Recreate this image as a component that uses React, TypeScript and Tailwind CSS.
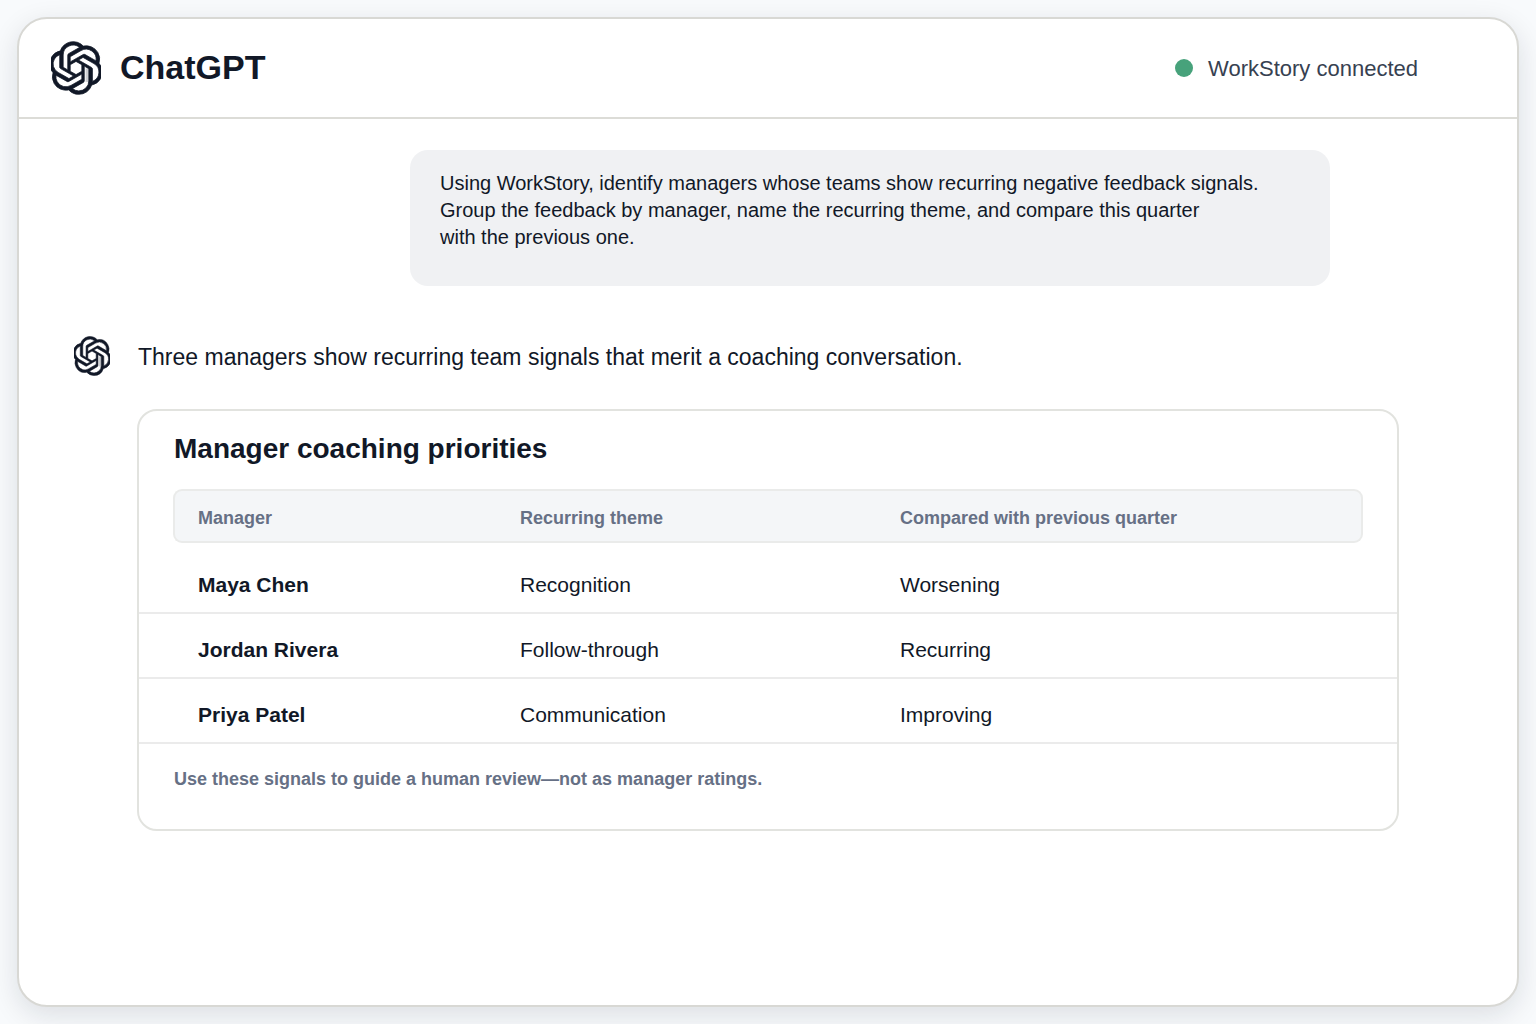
import { SiOpenai } from 'react-icons/si';

interface Priority {
  manager: string;
  theme: string;
  trend: string;
}

const priorities: Priority[] = [
  { manager: 'Maya Chen', theme: 'Recognition', trend: 'Worsening' },
  { manager: 'Jordan Rivera', theme: 'Follow-through', trend: 'Recurring' },
  { manager: 'Priya Patel', theme: 'Communication', trend: 'Improving' },
];

function Logo({ className }: { className: string }) {
  return (
    <svg viewBox="0.8 -0.3 22.4 24.6" preserveAspectRatio="none" className={className} aria-hidden="true">
      <path d="M17 12.2V18.4" stroke="#cfd1d5" strokeWidth="1.4" />
      <SiOpenai size={24} stroke="currentColor" strokeWidth="0.35" overflow="visible" />
    </svg>
  );
}

function Header() {
  return (
    <header className="flex h-[100px] items-center justify-between border-b-2 border-[#dcdcd7] pl-8 pr-[99px]">
      <div className="flex items-center gap-[19px]">
        <Logo className="h-[54px] w-[50px] shrink-0" />
        <h1 className="pb-0.5 text-[34px] font-bold leading-10">ChatGPT</h1>
      </div>
      <div className="flex items-center gap-[15px] text-[22px] leading-7 text-[#374151]">
        <span className="size-[18px] rounded-full bg-[#47a27b]" />
        <span className="pt-0.5">WorkStory connected</span>
      </div>
    </header>
  );
}

function PriorityTable() {
  return (
    <table className="w-full table-fixed border-separate border-spacing-0 text-left">
      <colgroup>
        <col className="w-[381px]" />
        <col className="w-[380px]" />
        <col />
      </colgroup>
      <thead className="text-lg leading-6 text-[#667085]">
        <tr>
          <th scope="col" className="pl-[34px]">
            <div className="flex h-[54px] items-center rounded-l-[9px] border-y-2 border-l-2 border-[#eaebea] bg-[#f4f6f8] pl-[23px] pt-1">
              Manager
            </div>
          </th>
          <th scope="col">
            <div className="flex h-[54px] items-center border-y-2 border-[#eaebea] bg-[#f4f6f8] pt-1">
              Recurring theme
            </div>
          </th>
          <th scope="col" className="pr-[34px]">
            <div className="flex h-[54px] items-center rounded-r-[9px] border-y-2 border-r-2 border-[#eaebea] bg-[#f4f6f8] pt-1">
              Compared with previous quarter
            </div>
          </th>
        </tr>
      </thead>
      <tbody className="text-[21px] leading-7">
        {priorities.map((row, index) => (
          <tr key={row.manager} className={index === 0 ? 'h-[71px]' : 'h-[65px]'}>
            <th scope="row" className="border-b-2 border-[#ebebeb] pb-[13px] pl-[59px] align-bottom">
              {row.manager}
            </th>
            <td className="border-b-2 border-[#ebebeb] pb-[13px] align-bottom">{row.theme}</td>
            <td className="border-b-2 border-[#ebebeb] pb-[13px] align-bottom">{row.trend}</td>
          </tr>
        ))}
      </tbody>
    </table>
  );
}

export default function App() {
  return (
    <div className="flex min-h-screen bg-[#f8fafc] p-[17px] font-['Liberation_Sans',Arial,sans-serif] text-[#111827]">
      <div className="flex-1 rounded-[30px] border-2 border-[#d8d8d4] bg-white shadow-[0_8px_28px_rgba(15,23,42,0.12)]">
        <Header />
        <main className="pt-[31px]">
          <div className="ml-auto mr-[187px] min-h-[136px] w-[920px] max-w-full rounded-[18px] bg-[#f0f1f3] px-[30px] pt-5 text-xl leading-[27px]">
            <p>
              Using WorkStory, identify managers whose teams show recurring negative feedback signals.
              <br />
              Group the feedback by manager, name the recurring theme, and compare this quarter
              <br />
              with the previous one.
            </p>
          </div>

          <div className="mt-[50px] flex items-center gap-7 pl-[55px]">
            <Logo className="h-10 w-9 shrink-0" />
            <p className="pt-0.5 text-[23px] leading-8">
              Three managers show recurring team signals that merit a coaching conversation.
            </p>
          </div>

          <section className="mx-[118px] mt-[33px] rounded-[20px] border-2 border-[#e2e3df] pb-[38px]">
            <h2 className="px-[35px] pb-[21px] pt-[19px] text-[28px] font-bold leading-[38px]">
              Manager coaching priorities
            </h2>
            <PriorityTable />
            <p className="px-[35px] pt-[23px] text-lg font-bold leading-6 text-[#667085]">
              Use these signals to guide a human review—not as manager ratings.
            </p>
          </section>
        </main>
      </div>
    </div>
  );
}
